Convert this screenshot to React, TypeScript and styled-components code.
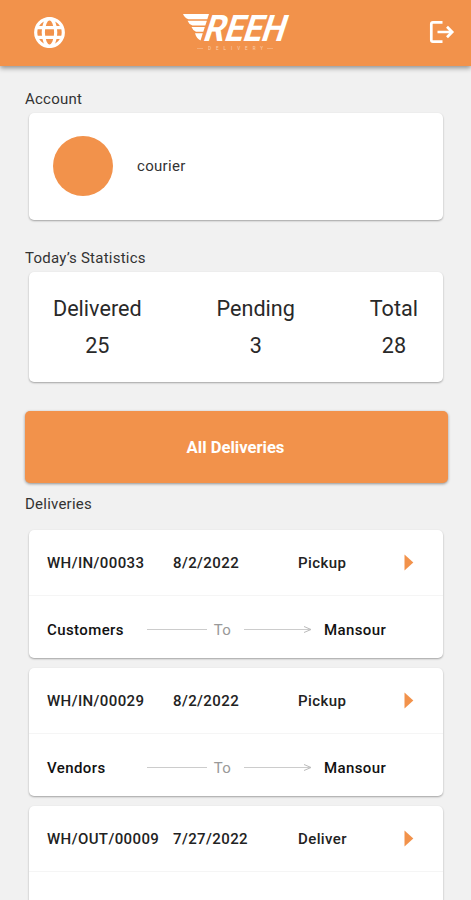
import React from "react";
import styled, { createGlobalStyle } from "styled-components";

const ORANGE = "#f2924b";

const GlobalStyle = createGlobalStyle`
  * { box-sizing: border-box; }
  html, body { margin: 0; height: 900px; overflow: hidden; background: #f1f1f1; }
  body { font-family: Roboto, "Liberation Sans", sans-serif; color: #333; }
`;

const Screen = styled.div`
  width: 471px;
  height: 900px;
  overflow: hidden;
  background: #f1f1f1;
`;

const Header = styled.header`
  display: grid;
  grid-template-columns: 80px 1fr 80px;
  align-items: center;
  height: 66px;
  padding: 0 16px 2px 33px;
  background: ${ORANGE};
  box-shadow: 0 2px 5px rgba(0, 0, 0, 0.42);
  svg { display: block; overflow: visible; }
`;

const IconButton = styled.button<{ $end?: boolean }>`
  justify-self: ${(p) => (p.$end ? "end" : "start")};
  padding: 0;
  border: 0;
  background: none;
`;

const LogoBox = styled.div`
  justify-self: center;
  margin: 2px 15px 0 0;
`;

const Content = styled.main`
  display: flex;
  flex-direction: column;
  padding: 23px 23px 0 25px;
`;

const Label = styled.h2<{ $gap?: number }>`
  margin: ${(p) => p.$gap ?? 0}px 0 0;
  height: 20px;
  line-height: 20px;
  font-size: 15px;
  font-weight: 400;
  letter-spacing: 0.23px;
`;

const Card = styled.section`
  margin: 0 5px 0 4px;
  border-radius: 5px;
  background: #fff;
  box-shadow: 0 1px 2px rgba(0, 0, 0, 0.33);
`;

const AccountCard = styled(Card)`
  display: flex;
  align-items: center;
  gap: 24px;
  height: 107px;
  margin-top: 4px;
  padding: 0 24px 1px;
`;

const Avatar = styled.div`
  width: 60px;
  height: 60px;
  border-radius: 50%;
  background: ${ORANGE};
`;

const UserName = styled.span`
  font-size: 15px;
  letter-spacing: 0.3px;
`;

const StatsCard = styled(Card)`
  display: flex;
  justify-content: space-between;
  height: 110px;
  margin-top: 4px;
  padding: 18px 25px 0 24px;
`;

const Stat = styled.div`
  display: flex;
  flex-direction: column;
  align-items: center;
  font-size: 21.6px;
  line-height: 37px;
  color: #292929;
`;

const MainButton = styled.button`
  height: 72px;
  margin-top: 29px;
  padding: 0 2px 0 0;
  border: 0;
  border-radius: 5px;
  background: ${ORANGE};
  box-shadow: 0 1px 3px rgba(0, 0, 0, 0.4);
  color: #fff;
  font-family: inherit;
  font-size: 16.6px;
  font-weight: 700;
`;

const DeliveryList = styled.div`
  display: flex;
  flex-direction: column;
  gap: 10px;
  margin-top: 16px;
`;

const DeliveryCard = styled(Card)`
  height: 128px;
  flex: none;
  font-size: 15px;
  font-weight: 500;
  letter-spacing: 0.4px;
  color: #222;
`;

const SummaryRow = styled.div`
  display: grid;
  grid-template-columns: 126px 125px 1fr 10px;
  align-items: center;
  height: 66px;
  padding: 0 29px 0 18px;
  border-bottom: 1px solid #f5f5f5;
  white-space: nowrap;
`;

const RouteRow = styled.div`
  display: grid;
  grid-template-columns: 100px 60px 31px 86px 1fr;
  align-items: center;
  height: 67px;
  padding: 0 18px;
  svg { display: block; }
`;

const To = styled.span`
  text-align: center;
  font-weight: 400;
  color: #999;
`;

const Place = styled.span`
  color: #111;
`;

const ArrowBox = styled.span`
  padding-left: 6px;
`;

const GlobeIcon = () => (
  <svg width="33" height="33" viewBox="0 0 33 33" fill="none" stroke="#fff" strokeWidth="3.2">
    <circle cx="16.5" cy="16.5" r="13.8" />
    <ellipse cx="16.5" cy="16.5" rx="6.2" ry="13.8" />
    <path d="M4 11.6h25M4 21.4h25" />
  </svg>
);

const ExitIcon = () => (
  <svg width="26" height="24" viewBox="0 0 26 24" fill="none" stroke="#fff" strokeWidth="2.7">
    <path d="M13.5 2.3H4Q2.3 2.3 2.3 4v16q0 1.7 1.7 1.7h9.5" />
    <path d="M8.5 12h14M18 6.8l5.2 5.2-5.2 5.2" />
  </svg>
);

const Logo = () => (
  <svg width="110" height="42" viewBox="0 0 110 42" fill="#fff">
    <path d="M1 2h26l-1.700 5.200H6.500Q2.500 6 1 2zM5.500 8.700h19.400l-1.600 4.900H10.500Q7 12.500 5.500 8.700zM9.500 15.100h13.300l-1.500 4.600h-7.300Q10.800 18.600 9.500 15.100zM13 21.200h7.800l-2.300 7.300Q14.500 26.500 13 21.200z" />
    <text
      transform="translate(20 28.5) skewX(-18)"
      fontFamily="Roboto, sans-serif"
      fontSize="36.5"
      fontWeight="700"
      textLength="81"
      lengthAdjust="spacingAndGlyphs"
    >
      REEH
    </text>
    <text x="26" y="38" fontFamily="Roboto, sans-serif" fontSize="4.5" textLength="55" opacity="0.55">
      DELIVERY
    </text>
    <path d="M15 36.500h6M85 36.500h6" stroke="#fff" strokeWidth="0.6" opacity="0.4" />
  </svg>
);

const PlayIcon = () => (
  <svg width="10" height="17" viewBox="0 0 10 17">
    <path d="M0.5 0.5 9.3 8.5 0.5 16.5z" fill={ORANGE} />
  </svg>
);

const Line = ({ arrow }: { arrow?: boolean }) => (
  <svg width={arrow ? 69 : 60} height="9" fill="none" stroke="#ccc">
    <path d={arrow ? "M0 4.5h66" : "M0 4.5h60"} />
    {arrow && <path d="M60 1.5l7 3-7 3" stroke="#bbb" />}
  </svg>
);

const stats = [
  { name: "Delivered", value: 25 },
  { name: "Pending", value: 3 },
  { name: "Total", value: 28 },
];

const deliveries = [
  { id: "WH/IN/00033", date: "8/2/2022", type: "Pickup", from: "Customers", to: "Mansour" },
  { id: "WH/IN/00029", date: "8/2/2022", type: "Pickup", from: "Vendors", to: "Mansour" },
  { id: "WH/OUT/00009", date: "7/27/2022", type: "Deliver", from: "Mansour", to: "Customers" },
];

export default function App() {
  return (
    <Screen>
      <GlobalStyle />
      <Header>
        <IconButton aria-label="Language"><GlobeIcon /></IconButton>
        <LogoBox><Logo /></LogoBox>
        <IconButton $end aria-label="Log out"><ExitIcon /></IconButton>
      </Header>
      <Content>
        <Label>Account</Label>
        <AccountCard>
          <Avatar />
          <UserName>courier</UserName>
        </AccountCard>
        <Label $gap={28}>Today’s Statistics</Label>
        <StatsCard>
          {stats.map((s) => (
            <Stat key={s.name}>
              <span>{s.name}</span>
              <span>{s.value}</span>
            </Stat>
          ))}
        </StatsCard>
        <MainButton>All Deliveries</MainButton>
        <Label $gap={11}>Deliveries</Label>
        <DeliveryList>
          {deliveries.map((d) => (
            <DeliveryCard key={d.id}>
              <SummaryRow>
                <span>{d.id}</span>
                <span>{d.date}</span>
                <span>{d.type}</span>
                <PlayIcon />
              </SummaryRow>
              <RouteRow>
                <Place>{d.from}</Place>
                <Line />
                <To>To</To>
                <ArrowBox><Line arrow /></ArrowBox>
                <Place>{d.to}</Place>
              </RouteRow>
            </DeliveryCard>
          ))}
        </DeliveryList>
      </Content>
    </Screen>
  );
}
